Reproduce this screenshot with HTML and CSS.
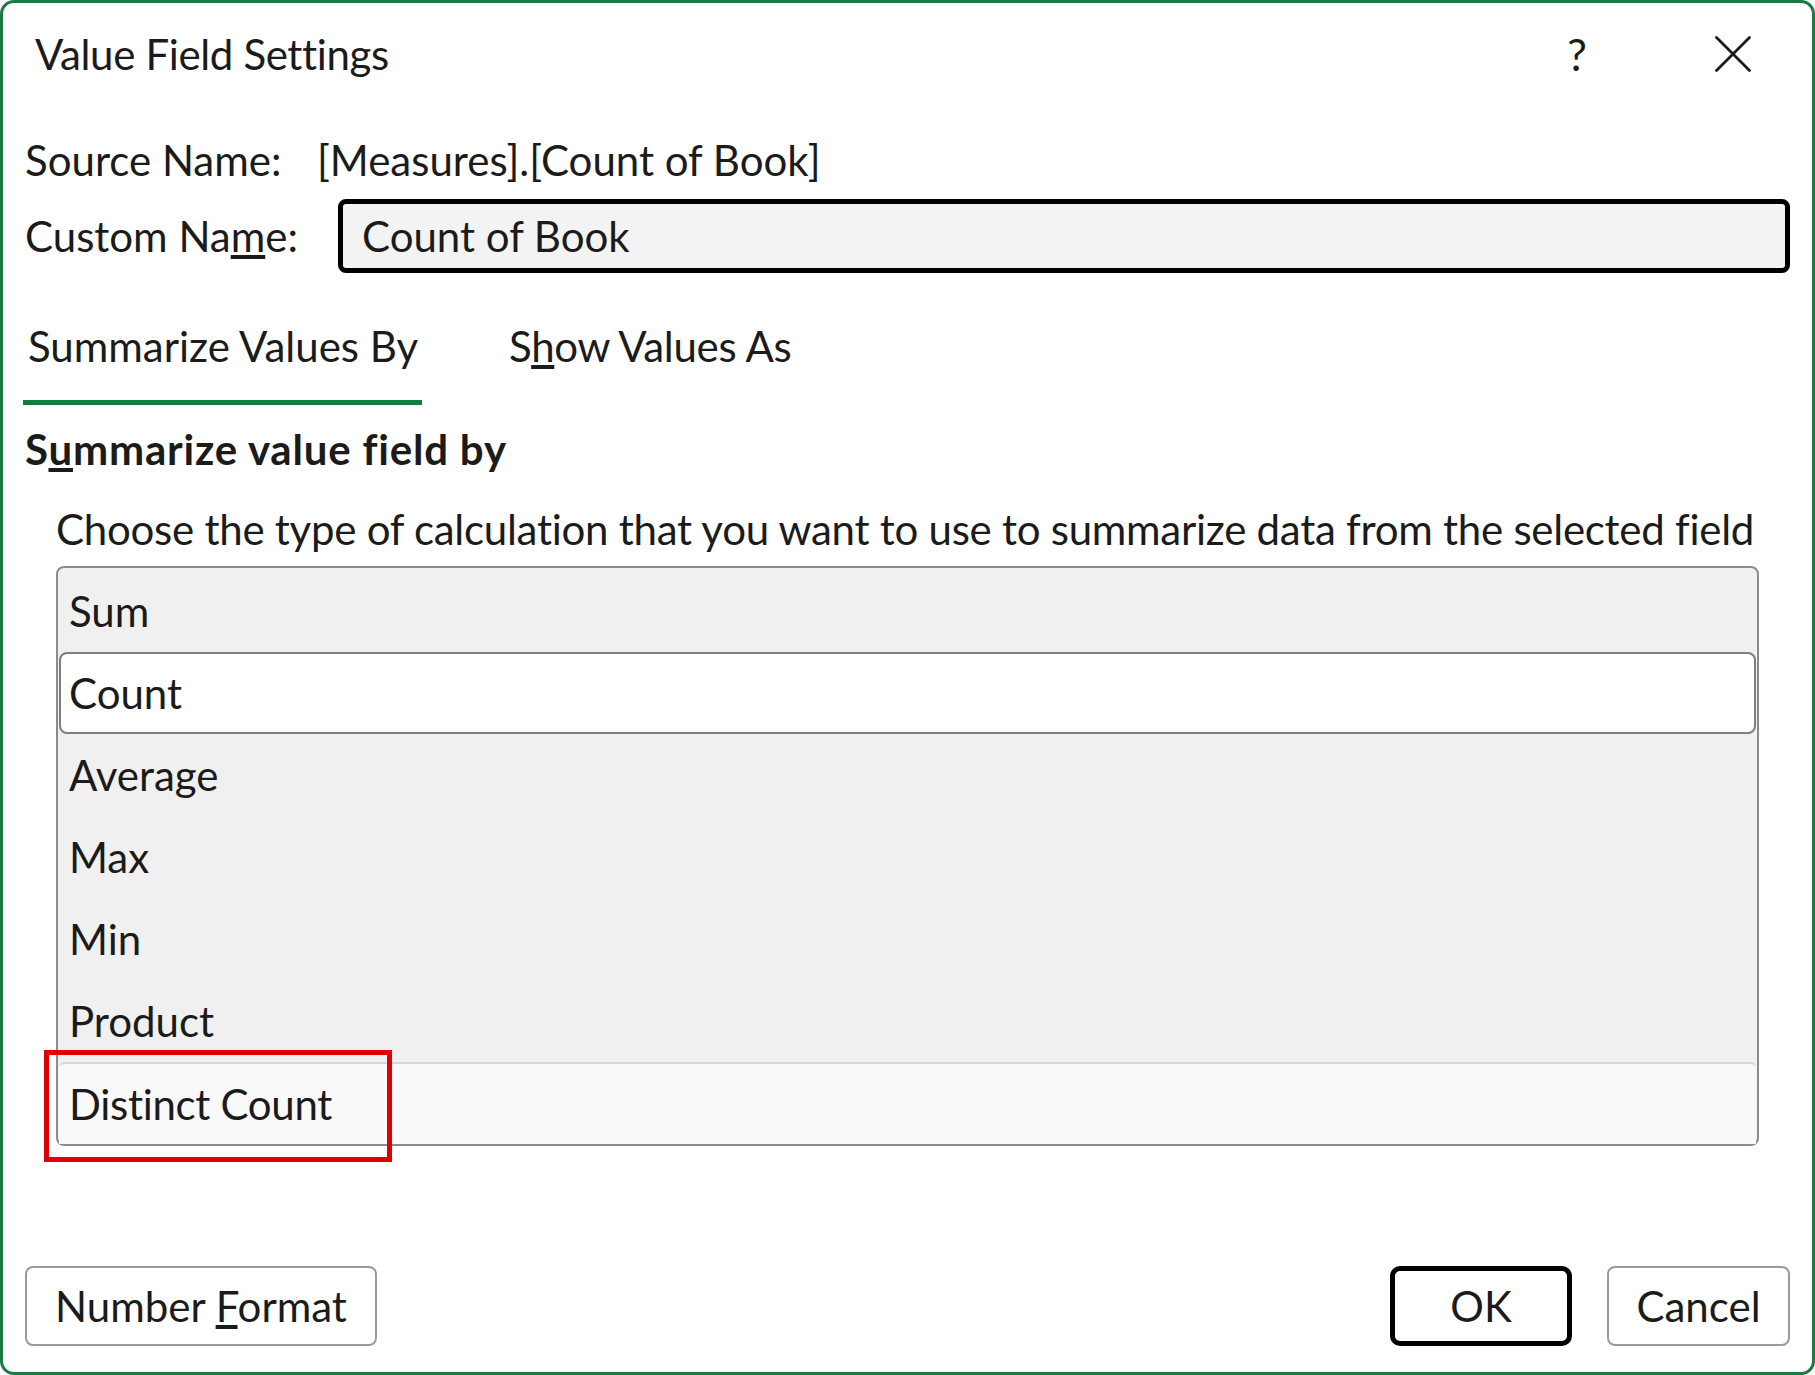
FILE: index.html
```html
<!DOCTYPE html>
<html lang="en">
<head>
<meta charset="utf-8">
<title>Value Field Settings</title>
<link rel="stylesheet" href="styles.css">
</head>
<body>
<div class="dialog">
  <div class="titlebar">
    <span class="title">Value Field Settings</span>
    <div class="controls">
      <span class="help">?</span>
      <svg class="close" viewBox="0 0 36 36" width="36" height="36" aria-hidden="true">
        <line x1="1.5" y1="1.5" x2="34.5" y2="34.5" />
        <line x1="34.5" y1="1.5" x2="1.5" y2="34.5" />
      </svg>
    </div>
  </div>
  <div class="content">
    <div class="row source">
      <span class="label">Source Name:</span>
      <span class="value">[Measures].[Count of Book]</span>
    </div>
    <div class="row custom">
      <span class="label">Custom Na<u>m</u>e:</span>
      <div class="input">Count of Book</div>
    </div>
    <div class="tabs">
      <div class="tab active"><span class="tab-label">Summarize Values By</span><span class="tab-line"></span></div>
      <div class="tab second"><span class="tab-label">S<u>h</u>ow Values As</span><span class="tab-line"></span></div>
    </div>
    <div class="heading">S<u>u</u>mmarize value field by</div>
    <div class="desc">Choose the type of calculation that you want to use to summarize data from the selected field</div>
    <div class="list">
      <div class="item">Sum</div>
      <div class="item selected">Count</div>
      <div class="item">Average</div>
      <div class="item">Max</div>
      <div class="item">Min</div>
      <div class="item">Product</div>
      <div class="item hover">Distinct Count</div>
    </div>
    <div class="footer">
      <button class="btn number">Number <u>F</u>ormat</button>
      <button class="btn ok">OK</button>
      <button class="btn cancel">Cancel</button>
    </div>
  </div>
  <div class="highlight"></div>
</div>
</body>
</html>
```
FILE: styles.css
```css
* { box-sizing: border-box; }
html, body { margin: 0; padding: 0; background: #ffffff; }
body {
  font-family: Lato, "Liberation Sans", sans-serif;
  font-size: 42px;
  color: #1b1b1b;
}
.dialog {
  position: relative;
  width: 1815px;
  height: 1375px;
  border: 3px solid #1b7a43;
  border-radius: 14px;
  background: #ffffff;
  overflow: hidden;
  display: flex;
  flex-direction: column;
}
.titlebar {
  height: 102px;
  display: flex;
  align-items: center;
  padding: 0 61px 0 32px;
}
.title { flex: 1; letter-spacing: -0.35px; }
.controls {
  display: flex;
  align-items: center;
  gap: 108px;
}
.help {
  width: 60px;
  text-align: center;
  font-size: 44px;
  font-weight: 400;
}
.close { display: block; }
.close line { stroke: #1b1b1b; stroke-width: 2.8; stroke-linecap: round; }
.content {
  padding: 0 22px;
  display: flex;
  flex-direction: column;
}
.row { display: flex; align-items: center; }
.source { margin-top: 19px; height: 72px; }
.source .label { width: 292px; flex: none; }
.custom { margin-top: 3px; height: 74px; }
.custom .label { width: 313px; flex: none; }
.input {
  flex: 1;
  height: 74px;
  border: 5px solid #000;
  border-radius: 8px;
  background: #f3f3f3;
  padding-left: 19px;
  display: flex;
  align-items: center;
}
.tabs {
  margin-top: 23px;
  display: flex;
}
.tab { display: flex; flex-direction: column; }
.tab.active { margin-left: -2px; width: 399px; }
.tab-label { line-height: 100px; height: 100px; padding-left: 5px; }
.tab.second .tab-label { padding-left: 87px; letter-spacing: -0.3px; }
.tab-line { display: block; height: 5px; margin-top: 4px; background: transparent; }
.tab.active .tab-line { background: #107c41; }
.heading {
  margin-top: 5px;
  line-height: 78px;
  font-weight: 700;
  letter-spacing: 0.8px;
}
.desc {
  margin: 11px 0 0 31px;
  line-height: 60px;
  letter-spacing: -0.26px;
}
.list {
  margin: 7px 31px 0;
  border: 2px solid #8c8c8c;
  border-radius: 8px;
  background: #f0f0f0;
  padding: 2px 1px 0;
}
.item {
  height: 82px;
  display: flex;
  align-items: center;
  padding-left: 10px;
}
.item.selected {
  background: #ffffff;
  border: 2px solid #7e7e7e;
  border-radius: 8px;
  padding-left: 8px;
}
.item.hover {
  background: #f9f9f9;
  border-top: 2px solid #d6d6d6;
  border-radius: 6px 6px 0 0;
  letter-spacing: -0.3px;
}
.footer {
  margin-top: 120px;
  height: 80px;
  display: flex;
}
.btn {
  font: inherit;
  color: inherit;
  background: #ffffff;
  height: 80px;
  border: 2px solid #9a9a9a;
  border-radius: 8px;
  padding: 0;
  text-align: center;
}
.btn.number { width: 352px; }
.btn.ok { width: 182px; margin-left: auto; border: 5px solid #000; border-radius: 10px; }
.btn.cancel { width: 183px; margin-left: 35px; }
.highlight {
  position: absolute;
  left: 41px;
  top: 1047px;
  width: 348px;
  height: 112px;
  border: 5px solid #e00000;
}
```
